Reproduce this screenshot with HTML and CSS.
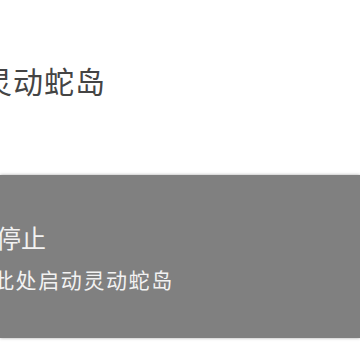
FILE: index.html
```html
<!DOCTYPE html>
<html lang="zh">
<head>
<meta charset="utf-8">
<link rel="stylesheet" href="styles.css">
</head>
<body>
<div class="page">
  <header class="head">
    <h1 class="title">灵动蛇岛</h1>
  </header>
  <section class="panel">
    <div class="panel-title">停止</div>
    <div class="panel-desc">此处启动灵动蛇岛</div>
  </section>
</div>
</body>
</html>
```

FILE: styles.css
```css
html, body {
  margin: 0;
  padding: 0;
  background: #ffffff;
  width: 360px;
  height: 360px;
  overflow: hidden;
}
.page {
  font-family: "Noto Sans CJK SC", "Noto Sans", sans-serif;
}
.head {
  height: 175px;
  padding-top: 61px;
  box-sizing: border-box;
}
.title {
  margin: 0 0 0 -18px;
  font-size: 30px;
  line-height: 38px;
  font-weight: 400;
  letter-spacing: 1px;
  color: #444444;
}
.panel {
  height: 163px;
  background: #808080;
  box-shadow: 0 0 3px rgba(0,0,0,0.35);
  padding-top: 46px;
  box-sizing: border-box;
  color: #f2f2f2;
}
.panel-title {
  margin-left: -4px;
  font-size: 25px;
  line-height: 32px;
}
.panel-desc {
  margin-left: -7px;
  margin-top: 12px;
  font-size: 21px;
  line-height: 28px;
  letter-spacing: 1.6px;
}
```
